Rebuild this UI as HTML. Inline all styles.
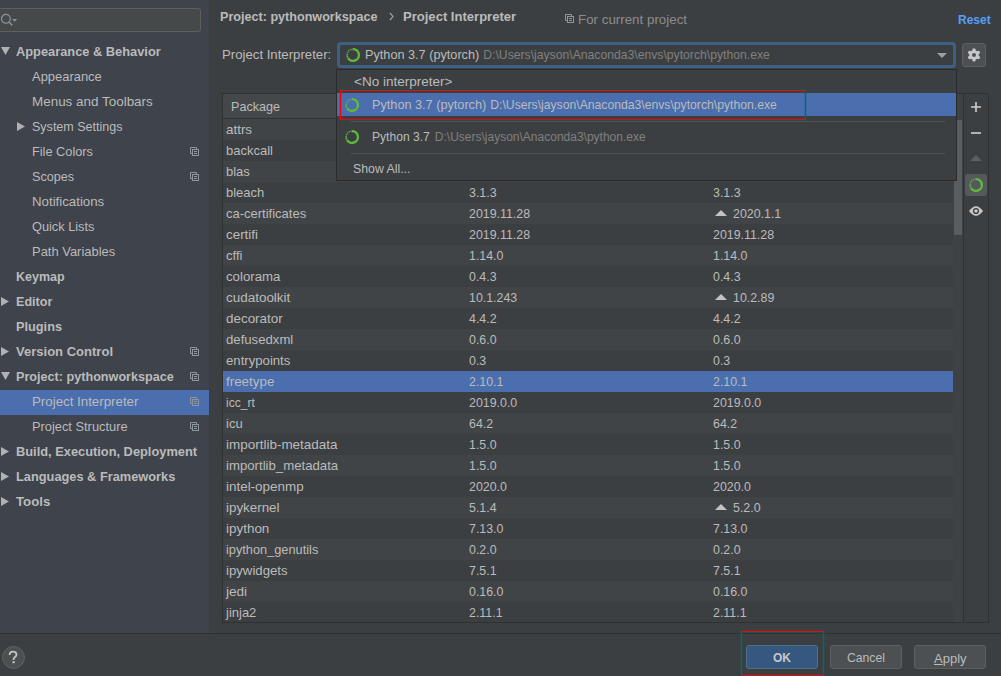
<!DOCTYPE html>
<html><head><meta charset="utf-8"><style>
*{box-sizing:border-box}
html,body{margin:0;padding:0}
body{width:1001px;height:676px;overflow:hidden;background:#3c3f41;position:relative;font-family:"Liberation Sans",sans-serif;color:#bbbbbb}
.a{position:absolute}
.t{position:absolute;font-size:13px;line-height:13px;white-space:nowrap}
.b{font-weight:bold}
#side{position:absolute;left:0;top:0;width:209px;height:633px;background:#3e434c;overflow:hidden}
.srow{position:absolute;left:0;width:209px;height:25px}
.sel{background:#4b6eaf}
.tri{position:absolute;display:block}
.trow{position:absolute;left:223px;width:730px;height:21px}
.ev{background:#414446}
.gray{color:#808080}
.btn{position:absolute;height:24px;border:1px solid #5e6060;background:#4c5052;border-radius:3px}
</style></head><body>

<div id="side">
<div class="a" style="left:-4px;top:8px;width:205px;height:24px;border:1px solid #5e6060;border-radius:3px;background:#45494a"></div>
<svg class="a" style="left:0;top:13px" width="18" height="14" viewBox="0 0 18 14"><circle cx="5.9" cy="5.85" r="4.4" fill="none" stroke="#8a9499" stroke-width="1.2"/><path d="M9.2 9.3L12.3 12.4" stroke="#8a9499" stroke-width="1.5"/><path d="M12.1 5.9h5.1l-2.55 2.9z" fill="#8a9499"/></svg>
<div class="srow" style="top:40px"></div>
<div class="t b" style="left:16px;top:45px;font-size:12.83px">Appearance &amp; Behavior</div>
<svg class="tri" style="left:1px;top:47px" width="9" height="8" viewBox="0 0 9 8"><path d="M0 0H9L4.5 8z" fill="#afb1b3"/></svg>
<div class="srow" style="top:65px"></div>
<div class="t" style="left:32px;top:70px;font-size:12.94px">Appearance</div>
<div class="srow" style="top:90px"></div>
<div class="t" style="left:32px;top:95px;font-size:13.44px">Menus and Toolbars</div>
<div class="srow" style="top:115px"></div>
<div class="t" style="left:32px;top:121px;font-size:12.54px">System Settings</div>
<svg class="tri" style="left:17px;top:122px" width="8" height="9" viewBox="0 0 8 9"><path d="M0 0L8 4.5L0 9z" fill="#afb1b3"/></svg>
<div class="srow" style="top:140px"></div>
<div class="t" style="left:32px;top:145px;font-size:12.75px">File Colors</div>
<div class="a" style="left:190px;top:147px;width:10px;height:10px;line-height:0"><svg width="10" height="10" viewBox="0 0 10 10" style="display:block"><path d="M2 6.5H0.5V0.5H6.5V2" fill="none" stroke="#8d969c" stroke-width="1"/><rect x="2.5" y="2.5" width="6" height="6" fill="none" stroke="#8d969c" stroke-width="1"/><path d="M4 4.5h3M4 6.5h3" stroke="#8d969c" stroke-width="1"/></svg></div>
<div class="srow" style="top:165px"></div>
<div class="t" style="left:32px;top:171px;font-size:12.64px">Scopes</div>
<div class="a" style="left:190px;top:172px;width:10px;height:10px;line-height:0"><svg width="10" height="10" viewBox="0 0 10 10" style="display:block"><path d="M2 6.5H0.5V0.5H6.5V2" fill="none" stroke="#8d969c" stroke-width="1"/><rect x="2.5" y="2.5" width="6" height="6" fill="none" stroke="#8d969c" stroke-width="1"/><path d="M4 4.5h3M4 6.5h3" stroke="#8d969c" stroke-width="1"/></svg></div>
<div class="srow" style="top:190px"></div>
<div class="t" style="left:32px;top:195px;font-size:13.27px">Notifications</div>
<div class="srow" style="top:215px"></div>
<div class="t" style="left:32px;top:220px;font-size:12.75px">Quick Lists</div>
<div class="srow" style="top:240px"></div>
<div class="t" style="left:32px;top:245px;font-size:12.95px">Path Variables</div>
<div class="srow" style="top:265px"></div>
<div class="t b" style="left:16px;top:271px;font-size:12.5px">Keymap</div>
<div class="srow" style="top:290px"></div>
<div class="t b" style="left:16px;top:296px;font-size:12.57px">Editor</div>
<svg class="tri" style="left:1px;top:297px" width="8" height="9" viewBox="0 0 8 9"><path d="M0 0L8 4.5L0 9z" fill="#afb1b3"/></svg>
<div class="srow" style="top:315px"></div>
<div class="t b" style="left:16px;top:320px;font-size:12.75px">Plugins</div>
<div class="srow" style="top:340px"></div>
<div class="t b" style="left:16px;top:345px;font-size:13.04px">Version Control</div>
<svg class="tri" style="left:1px;top:347px" width="8" height="9" viewBox="0 0 8 9"><path d="M0 0L8 4.5L0 9z" fill="#afb1b3"/></svg>
<div class="a" style="left:190px;top:347px;width:10px;height:10px;line-height:0"><svg width="10" height="10" viewBox="0 0 10 10" style="display:block"><path d="M2 6.5H0.5V0.5H6.5V2" fill="none" stroke="#8d969c" stroke-width="1"/><rect x="2.5" y="2.5" width="6" height="6" fill="none" stroke="#8d969c" stroke-width="1"/><path d="M4 4.5h3M4 6.5h3" stroke="#8d969c" stroke-width="1"/></svg></div>
<div class="srow" style="top:365px"></div>
<div class="t b" style="left:16px;top:371px;font-size:12.64px">Project: pythonworkspace</div>
<svg class="tri" style="left:1px;top:372px" width="9" height="8" viewBox="0 0 9 8"><path d="M0 0H9L4.5 8z" fill="#afb1b3"/></svg>
<div class="a" style="left:190px;top:372px;width:10px;height:10px;line-height:0"><svg width="10" height="10" viewBox="0 0 10 10" style="display:block"><path d="M2 6.5H0.5V0.5H6.5V2" fill="none" stroke="#8d969c" stroke-width="1"/><rect x="2.5" y="2.5" width="6" height="6" fill="none" stroke="#8d969c" stroke-width="1"/><path d="M4 4.5h3M4 6.5h3" stroke="#8d969c" stroke-width="1"/></svg></div>
<div class="srow sel" style="top:390px"></div>
<div class="t" style="left:32px;top:395px;font-size:13.31px">Project Interpreter</div>
<div class="a" style="left:190px;top:397px;width:10px;height:10px;line-height:0"><svg width="10" height="10" viewBox="0 0 10 10" style="display:block"><path d="M2 6.5H0.5V0.5H6.5V2" fill="none" stroke="#8d969c" stroke-width="1"/><rect x="2.5" y="2.5" width="6" height="6" fill="none" stroke="#8d969c" stroke-width="1"/><path d="M4 4.5h3M4 6.5h3" stroke="#8d969c" stroke-width="1"/></svg></div>
<div class="srow" style="top:415px"></div>
<div class="t" style="left:32px;top:420px;font-size:12.84px">Project Structure</div>
<div class="a" style="left:190px;top:422px;width:10px;height:10px;line-height:0"><svg width="10" height="10" viewBox="0 0 10 10" style="display:block"><path d="M2 6.5H0.5V0.5H6.5V2" fill="none" stroke="#8d969c" stroke-width="1"/><rect x="2.5" y="2.5" width="6" height="6" fill="none" stroke="#8d969c" stroke-width="1"/><path d="M4 4.5h3M4 6.5h3" stroke="#8d969c" stroke-width="1"/></svg></div>
<div class="srow" style="top:440px"></div>
<div class="t b" style="left:16px;top:445px;font-size:12.83px">Build, Execution, Deployment</div>
<svg class="tri" style="left:1px;top:447px" width="8" height="9" viewBox="0 0 8 9"><path d="M0 0L8 4.5L0 9z" fill="#afb1b3"/></svg>
<div class="srow" style="top:465px"></div>
<div class="t b" style="left:16px;top:470px;font-size:12.8px">Languages &amp; Frameworks</div>
<svg class="tri" style="left:1px;top:472px" width="8" height="9" viewBox="0 0 8 9"><path d="M0 0L8 4.5L0 9z" fill="#afb1b3"/></svg>
<div class="srow" style="top:490px"></div>
<div class="t b" style="left:16px;top:495px;font-size:13.23px">Tools</div>
<svg class="tri" style="left:1px;top:497px" width="8" height="9" viewBox="0 0 8 9"><path d="M0 0L8 4.5L0 9z" fill="#afb1b3"/></svg>
</div>
<div class="t b" style="left:220px;top:11px;font-size:12.6px">Project: pythonworkspace</div>
<svg class="a" style="left:389px;top:12px" width="5" height="9" viewBox="0 0 5 9"><path d="M0.8 0.8L4 4.5L0.8 8.2" fill="none" stroke="#acacac" stroke-width="1.1"/></svg>
<div class="t b" style="left:403px;top:10px;font-size:13.05px">Project Interpreter</div>
<div class="a" style="left:565px;top:14px;width:10px;height:10px;line-height:0"><svg width="10" height="10" viewBox="0 0 10 10" style="display:block"><path d="M2 6.5H0.5V0.5H6.5V2" fill="none" stroke="#8d969c" stroke-width="1"/><rect x="2.5" y="2.5" width="6" height="6" fill="none" stroke="#8d969c" stroke-width="1"/><path d="M4 4.5h3M4 6.5h3" stroke="#8d969c" stroke-width="1"/></svg></div>
<div class="t" style="left:578px;top:13px;color:#8c8c8c;font-size:13.35px">For current project</div>
<div class="t b" style="left:958px;top:14px;color:#589df6;font-size:12px">Reset</div>
<div class="t" style="left:222px;top:48px;font-size:13.2px">Project Interpreter:</div>
<div class="a" style="left:222px;top:93px;width:767px;height:530px;border:1px solid #2f3133;background:#3c3f41"></div>
<div class="a" style="left:223px;top:94px;width:730px;height:25px;background:#45484a;border-bottom:1px solid #323436"></div>
<div class="t" style="left:231px;top:101px;font-size:12.6px">Package</div>
<div class="trow ev" style="top:119px"></div>
<div class="t" style="left:226px;top:123px;font-size:13.42px">attrs</div>
<div class="trow" style="top:140px"></div>
<div class="t" style="left:226px;top:144px;font-size:13.0px">backcall</div>
<div class="trow ev" style="top:161px"></div>
<div class="t" style="left:226px;top:165px;font-size:13.0px">blas</div>
<div class="trow" style="top:182px"></div>
<div class="t" style="left:226px;top:186px;font-size:13.0px">bleach</div>
<div class="t" style="left:469px;top:187px;font-size:12.4px">3.1.3</div>
<div class="t" style="left:713px;top:187px;font-size:12.4px">3.1.3</div>
<div class="trow ev" style="top:203px"></div>
<div class="t" style="left:226px;top:207px;font-size:13.0px">ca-certificates</div>
<div class="t" style="left:469px;top:208px;font-size:12.4px">2019.11.28</div>
<div class="a" style="left:715px;top:210px;width:0;height:0;border-left:6px solid transparent;border-right:6px solid transparent;border-bottom:6px solid #c4c4c4"></div>
<div class="t" style="left:733px;top:208px;font-size:12.4px">2020.1.1</div>
<div class="trow" style="top:224px"></div>
<div class="t" style="left:226px;top:228px;font-size:13.42px">certifi</div>
<div class="t" style="left:469px;top:229px;font-size:12.4px">2019.11.28</div>
<div class="t" style="left:713px;top:229px;font-size:12.4px">2019.11.28</div>
<div class="trow ev" style="top:245px"></div>
<div class="t" style="left:226px;top:249px;font-size:13.0px">cffi</div>
<div class="t" style="left:469px;top:250px;font-size:12.4px">1.14.0</div>
<div class="t" style="left:713px;top:250px;font-size:12.4px">1.14.0</div>
<div class="trow" style="top:266px"></div>
<div class="t" style="left:226px;top:270px;font-size:13.22px">colorama</div>
<div class="t" style="left:469px;top:271px;font-size:12.4px">0.4.3</div>
<div class="t" style="left:713px;top:271px;font-size:12.4px">0.4.3</div>
<div class="trow ev" style="top:287px"></div>
<div class="t" style="left:226px;top:291px;font-size:13.46px">cudatoolkit</div>
<div class="t" style="left:469px;top:292px;font-size:12.4px">10.1.243</div>
<div class="a" style="left:715px;top:294px;width:0;height:0;border-left:6px solid transparent;border-right:6px solid transparent;border-bottom:6px solid #c4c4c4"></div>
<div class="t" style="left:733px;top:292px;font-size:12.4px">10.2.89</div>
<div class="trow" style="top:308px"></div>
<div class="t" style="left:226px;top:312px;font-size:13.43px">decorator</div>
<div class="t" style="left:469px;top:313px;font-size:12.4px">4.4.2</div>
<div class="t" style="left:713px;top:313px;font-size:12.4px">4.4.2</div>
<div class="trow ev" style="top:329px"></div>
<div class="t" style="left:226px;top:333px;font-size:13.16px">defusedxml</div>
<div class="t" style="left:469px;top:334px;font-size:12.4px">0.6.0</div>
<div class="t" style="left:713px;top:334px;font-size:12.4px">0.6.0</div>
<div class="trow" style="top:350px"></div>
<div class="t" style="left:226px;top:354px;font-size:13.17px">entrypoints</div>
<div class="t" style="left:469px;top:355px;font-size:12.4px">0.3</div>
<div class="t" style="left:713px;top:355px;font-size:12.4px">0.3</div>
<div class="trow sel" style="top:371px"></div>
<div class="t" style="left:226px;top:375px;font-size:13.39px">freetype</div>
<div class="t" style="left:469px;top:376px;font-size:12.4px">2.10.1</div>
<div class="t" style="left:713px;top:376px;font-size:12.4px">2.10.1</div>
<div class="trow" style="top:392px"></div>
<div class="t" style="left:226px;top:397px;font-size:12.08px">icc_rt</div>
<div class="t" style="left:469px;top:397px;font-size:12.4px">2019.0.0</div>
<div class="t" style="left:713px;top:397px;font-size:12.4px">2019.0.0</div>
<div class="trow ev" style="top:413px"></div>
<div class="t" style="left:226px;top:417px;font-size:13.0px">icu</div>
<div class="t" style="left:469px;top:418px;font-size:12.4px">64.2</div>
<div class="t" style="left:713px;top:418px;font-size:12.4px">64.2</div>
<div class="trow" style="top:434px"></div>
<div class="t" style="left:226px;top:438px;font-size:13.48px">importlib-metadata</div>
<div class="t" style="left:469px;top:439px;font-size:12.4px">1.5.0</div>
<div class="t" style="left:713px;top:439px;font-size:12.4px">1.5.0</div>
<div class="trow ev" style="top:455px"></div>
<div class="t" style="left:226px;top:459px;font-size:13.2px">importlib_metadata</div>
<div class="t" style="left:469px;top:460px;font-size:12.4px">1.5.0</div>
<div class="t" style="left:713px;top:460px;font-size:12.4px">1.5.0</div>
<div class="trow" style="top:476px"></div>
<div class="t" style="left:226px;top:480px;font-size:13.43px">intel-openmp</div>
<div class="t" style="left:469px;top:481px;font-size:12.4px">2020.0</div>
<div class="t" style="left:713px;top:481px;font-size:12.4px">2020.0</div>
<div class="trow ev" style="top:497px"></div>
<div class="t" style="left:226px;top:501px;font-size:13.36px">ipykernel</div>
<div class="t" style="left:469px;top:502px;font-size:12.4px">5.1.4</div>
<div class="a" style="left:715px;top:504px;width:0;height:0;border-left:6px solid transparent;border-right:6px solid transparent;border-bottom:6px solid #c4c4c4"></div>
<div class="t" style="left:733px;top:502px;font-size:12.4px">5.2.0</div>
<div class="trow" style="top:518px"></div>
<div class="t" style="left:226px;top:522px;font-size:13.44px">ipython</div>
<div class="t" style="left:469px;top:523px;font-size:12.4px">7.13.0</div>
<div class="t" style="left:713px;top:523px;font-size:12.4px">7.13.0</div>
<div class="trow ev" style="top:539px"></div>
<div class="t" style="left:226px;top:543px;font-size:12.78px">ipython_genutils</div>
<div class="t" style="left:469px;top:544px;font-size:12.4px">0.2.0</div>
<div class="t" style="left:713px;top:544px;font-size:12.4px">0.2.0</div>
<div class="trow" style="top:560px"></div>
<div class="t" style="left:226px;top:564px;font-size:13.19px">ipywidgets</div>
<div class="t" style="left:469px;top:565px;font-size:12.4px">7.5.1</div>
<div class="t" style="left:713px;top:565px;font-size:12.4px">7.5.1</div>
<div class="trow ev" style="top:581px"></div>
<div class="t" style="left:226px;top:585px;font-size:13.59px">jedi</div>
<div class="t" style="left:469px;top:586px;font-size:12.4px">0.16.0</div>
<div class="t" style="left:713px;top:586px;font-size:12.4px">0.16.0</div>
<div class="trow" style="top:602px"></div>
<div class="t" style="left:226px;top:606px;font-size:13.0px">jinja2</div>
<div class="t" style="left:469px;top:607px;font-size:12.4px">2.11.1</div>
<div class="t" style="left:713px;top:607px;font-size:12.4px">2.11.1</div>
<div class="a" style="left:953px;top:94px;width:10px;height:528px;background:#3f4244"></div>
<div class="a" style="left:954px;top:120px;width:8px;height:115px;background:#5a5d5f"></div>
<div class="a" style="left:963px;top:94px;width:1px;height:528px;background:#2f3133"></div>
<svg class="a" style="left:970px;top:101px" width="12" height="12" viewBox="0 0 12 12"><path d="M6 1v10M1 6h10" stroke="#cfcfcf" stroke-width="1.6"/></svg>
<svg class="a" style="left:970px;top:127px" width="12" height="12" viewBox="0 0 12 12"><path d="M1 6h10" stroke="#cfcfcf" stroke-width="1.6"/></svg>
<div class="a" style="left:970px;top:155px;width:0;height:0;border-left:6px solid transparent;border-right:6px solid transparent;border-bottom:6px solid #5c5f61"></div>
<div class="a" style="left:965px;top:174px;width:22px;height:22px;background:#55595c;border-radius:3px"></div>
<svg style="position:absolute;left:967.0px;top:176.0px" width="18" height="18" viewBox="0 0 18 18"><path d="M8.59 3.11 A5.9 5.9 0 1 1 4.00 12.13" fill="none" stroke="#5fb83d" stroke-width="2.4"/><circle cx="3.39" cy="10.82" r="0.95" fill="#5fb83d"/><circle cx="3.10" cy="8.79" r="0.85" fill="#5fb83d"/><circle cx="3.53" cy="6.79" r="0.8" fill="#5fb83d"/><circle cx="4.62" cy="5.05" r="0.75" fill="#5fb83d"/><circle cx="6.23" cy="3.79" r="0.7" fill="#5fb83d"/><circle cx="7.77" cy="3.23" r="0.6" fill="#5fb83d"/></svg>
<svg class="a" style="left:968px;top:205px" width="16" height="12" viewBox="0 0 16 12"><path d="M1 6Q8 -3.5 15 6Q8 15.5 1 6z" fill="#c8c8c8"/><circle cx="8" cy="6" r="3.1" fill="#3c3f41"/><circle cx="8" cy="6" r="1.8" fill="#c8c8c8"/></svg>
<div class="a" style="left:337px;top:42px;width:619px;height:26px;border:3px solid #3d6185;border-radius:4px;background:#3c3f41"></div>
<svg style="position:absolute;left:344.0px;top:46.0px" width="18" height="18" viewBox="0 0 18 18"><path d="M8.59 3.11 A5.9 5.9 0 1 1 4.00 12.13" fill="none" stroke="#5fb83d" stroke-width="2.4"/><circle cx="3.39" cy="10.82" r="0.95" fill="#5fb83d"/><circle cx="3.10" cy="8.79" r="0.85" fill="#5fb83d"/><circle cx="3.53" cy="6.79" r="0.8" fill="#5fb83d"/><circle cx="4.62" cy="5.05" r="0.75" fill="#5fb83d"/><circle cx="6.23" cy="3.79" r="0.7" fill="#5fb83d"/><circle cx="7.77" cy="3.23" r="0.6" fill="#5fb83d"/></svg>
<div class="t" style="left:365px;top:49px;font-size:12.7px">Python 3.7 (pytorch)<span class="gray" style="font-size:12.2px;margin-left:4px">D:\Users\jayson\Anaconda3\envs\pytorch\python.exe</span></div>
<div class="a" style="left:937px;top:53px;width:0;height:0;border-left:5px solid transparent;border-right:5px solid transparent;border-top:5.5px solid #a0a0a0"></div>
<div class="btn" style="left:962px;top:43px;width:24px;height:24px"></div>
<svg class="a" style="left:967px;top:48px" width="14" height="14" viewBox="0 0 14 14"><g fill="#c8c8c8"><circle cx="7" cy="7" r="4.8"/><rect x="5.5" y="0.5" width="3" height="13" rx="0.8"/><rect x="5.5" y="0.5" width="3" height="13" rx="0.8" transform="rotate(60 7 7)"/><rect x="5.5" y="0.5" width="3" height="13" rx="0.8" transform="rotate(120 7 7)"/></g><circle cx="7" cy="7" r="2" fill="#4c5052"/></svg>
<div class="a" style="left:336px;top:69px;width:621px;height:112px;border:1px solid #2b2b2b;background:#3c3f41"></div>
<div class="t" style="left:354px;top:75px;font-size:13.5px">&lt;No interpreter&gt;</div>
<div class="a" style="left:337px;top:93px;width:619px;height:23px;background:#4b6eaf"></div>
<svg style="position:absolute;left:343.0px;top:96.0px" width="18" height="18" viewBox="0 0 18 18"><path d="M8.59 3.11 A5.9 5.9 0 1 1 4.00 12.13" fill="none" stroke="#5fb83d" stroke-width="2.4"/><circle cx="3.39" cy="10.82" r="0.95" fill="#5fb83d"/><circle cx="3.10" cy="8.79" r="0.85" fill="#5fb83d"/><circle cx="3.53" cy="6.79" r="0.8" fill="#5fb83d"/><circle cx="4.62" cy="5.05" r="0.75" fill="#5fb83d"/><circle cx="6.23" cy="3.79" r="0.7" fill="#5fb83d"/><circle cx="7.77" cy="3.23" r="0.6" fill="#5fb83d"/></svg>
<div class="t" style="left:372px;top:99px;font-size:12.7px">Python 3.7 (pytorch)<span style="font-size:12.2px;margin-left:4px">D:\Users\jayson\Anaconda3\envs\pytorch\python.exe</span></div>
<div class="a" style="left:351px;top:121px;width:594px;height:1px;background:#515151"></div>
<svg style="position:absolute;left:343.0px;top:128.0px" width="18" height="18" viewBox="0 0 18 18"><path d="M8.59 3.11 A5.9 5.9 0 1 1 4.00 12.13" fill="none" stroke="#5fb83d" stroke-width="2.4"/><circle cx="3.39" cy="10.82" r="0.95" fill="#5fb83d"/><circle cx="3.10" cy="8.79" r="0.85" fill="#5fb83d"/><circle cx="3.53" cy="6.79" r="0.8" fill="#5fb83d"/><circle cx="4.62" cy="5.05" r="0.75" fill="#5fb83d"/><circle cx="6.23" cy="3.79" r="0.7" fill="#5fb83d"/><circle cx="7.77" cy="3.23" r="0.6" fill="#5fb83d"/></svg>
<div class="t" style="left:372px;top:131px;font-size:12.1px">Python 3.7<span class="gray" style="font-size:12px;margin-left:5px">D:\Users\jayson\Anaconda3\python.exe</span></div>
<div class="a" style="left:351px;top:153px;width:594px;height:1px;background:#515151"></div>
<div class="t" style="left:353px;top:163px;font-size:12.3px">Show All...</div>
<div class="a" style="left:340px;top:90px;width:466px;height:30px;border:1px solid #ff0000;box-shadow:0 0 0 1px rgba(0,100,100,0.22),inset 0 0 0 1px rgba(0,100,100,0.22)"></div>
<div class="a" style="left:0;top:633px;width:1001px;height:1px;background:#2f3133"></div>
<div class="a" style="left:2px;top:646px;width:23px;height:23px;border:1px solid #5e6060;border-radius:50%;background:#4c5052"></div>
<svg class="a" style="left:7px;top:650px" width="12" height="14" viewBox="0 0 12 14"><path d="M2.6 5C2.6 2.6 4.2 1.6 6 1.6C8 1.6 9.5 2.8 9.5 4.7C9.5 7 6.6 7.1 6.6 9.3V10" fill="none" stroke="#c4c4c4" stroke-width="1.8"/><rect x="5.5" y="11.2" width="2.2" height="2" fill="#c4c4c4"/></svg>
<div class="btn" style="left:746px;top:645px;width:72px;background:#365880;border-color:#4c708c"></div>
<div class="t b" style="left:773px;top:652px;font-size:12px;color:#c8c8c8">OK</div>
<div class="btn" style="left:830px;top:645px;width:72px"></div>
<div class="t" style="left:847px;top:652px;font-size:12.2px">Cancel</div>
<div class="btn" style="left:914px;top:645px;width:72px"></div>
<div class="t" style="left:934px;top:652px"><u>A</u>pply</div>
<div class="a" style="left:741px;top:631px;width:83px;height:45px;border:1px solid #ff0000;box-shadow:0 0 0 1px rgba(0,100,100,0.22),inset 0 0 0 1px rgba(0,100,100,0.22)"></div>
</body></html>
